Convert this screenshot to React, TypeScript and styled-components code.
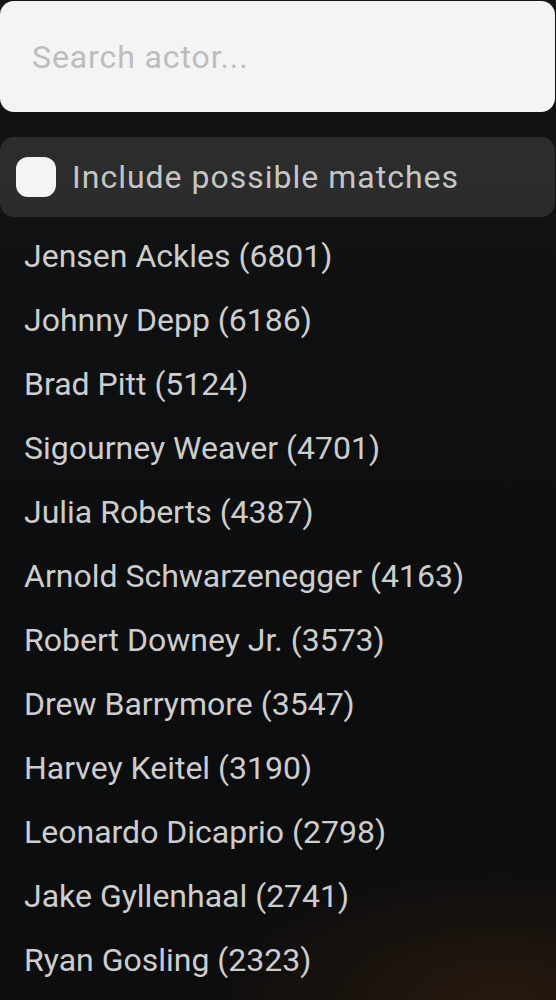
import styled, { createGlobalStyle } from 'styled-components';

const GlobalStyle = createGlobalStyle`
  html, body {
    margin: 0;
    padding: 0;
    background: #0c0e0f;
  }
  * {
    box-sizing: border-box;
  }
`;

const Page = styled.div`
  width: 556px;
  min-height: 1000px;
  padding: 1px 1px 0 0;
  font-family: Roboto, "Noto Sans", sans-serif;
  background:
    radial-gradient(ellipse 55% 14% at 90% 100%, rgba(48, 30, 16, 0.7), rgba(48, 30, 16, 0) 100%),
    linear-gradient(180deg, #151615 0%, #0e1011 30%, #0b0d0e 65%, #0d0d0d 100%);
  display: flex;
  flex-direction: column;
`;

const SearchInput = styled.input`
  height: 111px;
  width: 100%;
  border: none;
  outline: none;
  border-radius: 14px;
  background: #f4f4f4;
  padding: 0 32px;
  font-family: inherit;
  font-size: 32px;
  letter-spacing: 0.9px;
  color: #222;

  &::placeholder {
    color: #bdbdbd;
  }
`;

const MatchToggle = styled.label`
  margin-top: 25px;
  height: 80px;
  display: flex;
  align-items: center;
  gap: 16px;
  padding: 0 16px;
  border-radius: 14px;
  background: rgba(255, 255, 255, 0.11);
  font-size: 32px;
  letter-spacing: 1px;
  color: #c6c6c6;
  cursor: pointer;
`;

const CheckBox = styled.input.attrs({ type: 'checkbox' })`
  appearance: none;
  margin: 0;
  width: 40px;
  height: 40px;
  border-radius: 12px;
  background: #f4f4f4;
  flex-shrink: 0;
`;

const ActorList = styled.ul`
  list-style: none;
  margin: 7px 0 0;
  padding: 0 0 0 24px;
`;

const ActorItem = styled.li`
  height: 64px;
  line-height: 64px;
  font-size: 32px;
  color: #cdcdcd;
  white-space: nowrap;
`;

const actors: [string, number][] = [
  ['Jensen Ackles', 6801],
  ['Johnny Depp', 6186],
  ['Brad Pitt', 5124],
  ['Sigourney Weaver', 4701],
  ['Julia Roberts', 4387],
  ['Arnold Schwarzenegger', 4163],
  ['Robert Downey Jr.', 3573],
  ['Drew Barrymore', 3547],
  ['Harvey Keitel', 3190],
  ['Leonardo Dicaprio', 2798],
  ['Jake Gyllenhaal', 2741],
  ['Ryan Gosling', 2323],
];

export default function App() {
  return (
    <>
      <GlobalStyle />
      <Page>
        <SearchInput placeholder="Search actor..." />
        <MatchToggle>
          <CheckBox />
          Include possible matches
        </MatchToggle>
        <ActorList>
          {actors.map(([name, count]) => (
            <ActorItem key={name}>
              {name} ({count})
            </ActorItem>
          ))}
        </ActorList>
      </Page>
    </>
  );
}
